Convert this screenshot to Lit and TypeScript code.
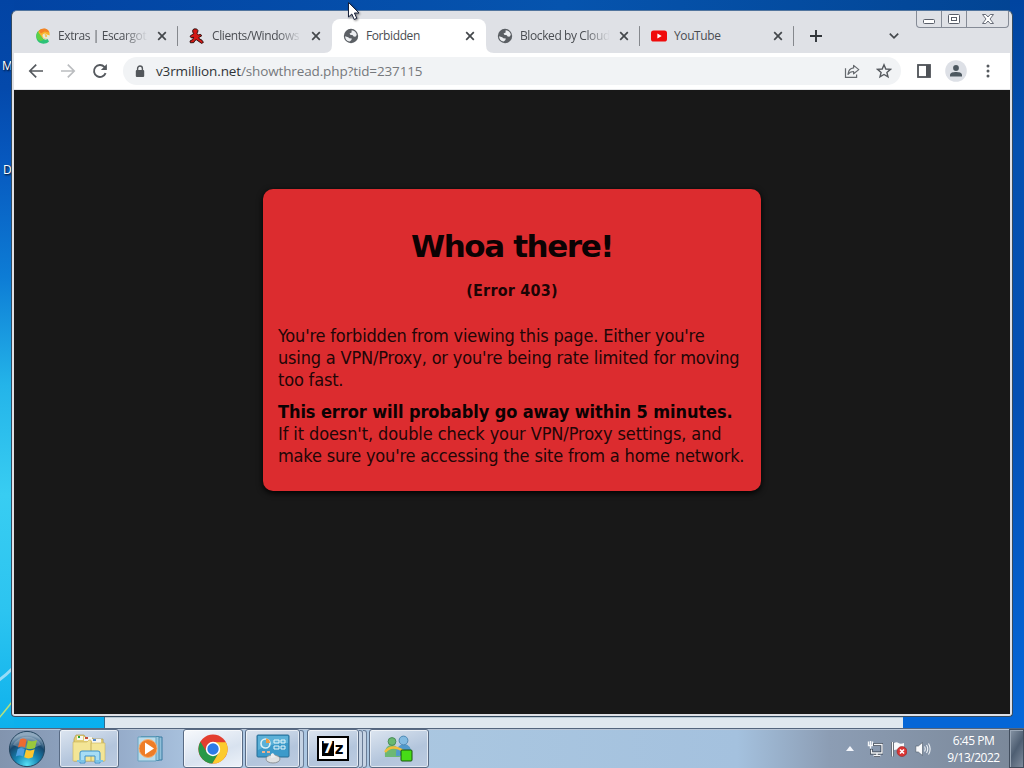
import { LitElement, css, html, svg, nothing } from 'lit';
import { customElement, property } from 'lit/decorators.js';
import { classMap } from 'lit/directives/class-map.js';

const globe = svg`
  <circle cx="8" cy="8" r="7.2" fill="#5b5f64" />
  <path d="M2.1 8.2L5.2 9.2L6.4 10.2L8.8 10.4L8.4 12L6.8 13.6C3.6 13 2 10.8 2.1 8.2Z" fill="#eceef1" />
  <path d="M8.6 2.2C11.6 2.4 13.4 4.4 13.8 7L12.4 8.8L10.6 8.6L9.8 7.2L7.2 6.8L6.6 5.4L8.6 4.6Z" fill="#eceef1" />
`;

const icons: Record<string, unknown> = {
  globe,
  escargot: svg`
    <path d="M2.6 3.4C.2 7 .8 12.4 4.2 14.6C7.4 16.4 11.6 15.8 14 13.4L12.6 11C10 12.4 7.4 11.4 6.8 8.6L6 4Z" fill="#2cc277" />
    <path d="M1.6 9C1.2 5.4 2.8 2.6 5.4 1.4L7.4 6.4C6.6 8.4 7.4 10.6 9.4 11.6L5.6 13C3.2 12.4 1.8 11 1.6 9Z" fill="#5fd044" />
    <path d="M3.2 4C4.8.6 9.6-.4 12.8 2C14.4 3.4 15 5.4 14.4 7.6C13.8 9.8 12.4 10.8 10.2 11L7.4 9.8L5 6.4Z" fill="#f8b32a" />
    <path d="M4 2.800C6.600 0 10.800 -.2 13.200 2.400L14.200 4.600L9.600 3.600L5.800 5.400Z" fill="#f28327" />
    <path d="M7.600 6.800C8.800 5.200 10.800 5.200 12 6.400L14.600 7.400L14.200 10.200L10.600 10.800C8.200 10.600 7 8.600 7.600 6.800Z" fill="#e6e9d8" />
    <path d="M9.400 5.800C11.400 5.600 12.600 7.200 12 9L10.400 9.200Z" fill="#f5c45c" />
  `,
  runner: svg`
    <path d="M4.800.9H7.600L8.900 2.400L8.700 4.300L7.700 5.300L9.400 6.800L11.800 6.400L12.600 8L9.800 9.400L10 10.600L13 12.200L14.400 14.400L12.600 15.400L7.400 11.800L6 12.400L4.800 14.600L1.400 14.800L1 13L3.600 11.600L4.600 9.200L2.200 9.800L1 8.200L3.200 6.600L4.800 5.600L3.800 4.200L3.700 2.300Z" fill="#d41915" stroke="#220606" stroke-width=".9" />
  `,
  youtube: svg`
    <rect x="0" y="2.4" width="16" height="11.2" rx="2.6" fill="#f00b0b" />
    <path d="M6.4 5.6L10.7 8L6.4 10.4Z" fill="#fff" />
  `,
};

@customElement('browser-tab')
export class BrowserTab extends LitElement {
  @property() icon = 'globe';
  @property() label = '';
  @property({ type: Boolean }) active = false;
  @property({ type: Boolean }) divider = false;
  @property({ type: Boolean }) fade = false;

  render() {
    return html`
      <div class=${classMap({ tab: true, active: this.active, divider: this.divider })}>
        <svg class="icon" viewBox="0 0 16 16">${icons[this.icon]}</svg>
        <span class=${classMap({ label: true, fade: this.fade })}>${this.label}</span>
        <svg class="close" viewBox="0 0 10 10">
          <path d="M1.2 1.2L8.8 8.8M8.8 1.2L1.2 8.8" stroke="#43474b" stroke-width="1.7" />
        </svg>
      </div>
      ${this.active
        ? html`<svg class="foot left" viewBox="0 0 8 8"><path d="M8 0V8H0Q8 8 8 0Z" fill="#fff" /></svg>
            <svg class="foot right" viewBox="0 0 8 8"><path d="M0 0V8H8Q0 8 0 0Z" fill="#fff" /></svg>`
        : nothing}
    `;
  }

  static styles = css`
    :host {
      display: block;
      position: relative;
      width: 154px;
      height: 34px;
    }
    .tab {
      box-sizing: border-box;
      height: 34px;
      display: flex;
      align-items: center;
      padding: 0 11px 0 11px;
      border-radius: 8px 8px 0 0;
      position: relative;
    }
    .tab.active {
      background: #fff;
    }
    .tab.divider {
      background: linear-gradient(#85888d, #85888d) right 7px / 1px 20px no-repeat;
    }
    .icon {
      width: 16px;
      height: 16px;
      flex: none;
    }
    .label {
      margin-left: 7px;
      width: 90px;
      flex: none;
      overflow: hidden;
      white-space: nowrap;
      color: #4a4d52;
      font: 12px/16px 'Open Sans', 'Noto Sans', sans-serif;
      letter-spacing: -0.4px;
    }
    .label.fade {
      -webkit-mask-image: linear-gradient(90deg, #000 72%, transparent);
      mask-image: linear-gradient(90deg, #000 72%, transparent);
    }
    .close {
      width: 10px;
      height: 10px;
      margin-left: 9px;
      flex: none;
    }
    .foot {
      position: absolute;
      bottom: 0;
      width: 8px;
      height: 8px;
    }
    .left {
      left: -8px;
    }
    .right {
      right: -8px;
    }
  `;
}

@customElement('browser-toolbar')
export class BrowserToolbar extends LitElement {
  render() {
    return html`
      <svg class="nav" viewBox="0 0 16 16">
        <path d="M15 8H2M8.2 1.6L1.8 8L8.2 14.4" stroke="#55595e" />
      </svg>
      <svg class="nav" viewBox="0 0 16 16">
        <path d="M1 8H14M7.8 1.6L14.2 8L7.8 14.4" stroke="#bbbdc0" />
      </svg>
      <svg class="nav" viewBox="0 0 16 16">
        <path d="M13.6 10.2A6 6 0 1 1 12.4 3.9L14 5.6" stroke="#55595e" stroke-width="1.9" />
        <path d="M14.9 1V7H8.9Z" fill="#55595e" />
      </svg>
      <div class="address">
        <svg class="lock" viewBox="0 0 10 13">
          <path d="M2.6 5.5V3.4a2.4 2.4 0 0 1 4.8 0V5.5" stroke="#53575b" stroke-width="1.4" fill="none" />
          <rect x=".8" y="5" width="8.4" height="7" rx="1" fill="#53575b" />
        </svg>
        <span class="url"><span class="domain">v3rmillion.net</span>/showthread.php?tid=237115</span>
        <svg class="share" viewBox="0 0 16 16">
          <path d="M1.5 5.2V14.4H12.6V11.6" stroke="#65696e" stroke-width="1.2" fill="none" />
          <path d="M9.6 2.4L14.8 6.6L9.6 10.8V8.5C7 8.5 5.3 9.3 4 11.4C4.3 7.8 6.2 5.2 9.6 4.9Z" stroke="#65696e" stroke-width="1.2" fill="none" stroke-linejoin="round" />
        </svg>
        <svg class="star" viewBox="0 0 16 16">
          <path d="M8 1.8L9.8 6L14.4 6.4L10.9 9.4L12 13.9L8 11.5L4 13.9L5.1 9.4L1.6 6.4L6.2 6Z" stroke="#55595e" stroke-width="1.4" fill="none" />
        </svg>
      </div>
      <svg class="panel" viewBox="0 0 14 14">
        <rect x="1" y="1" width="12" height="12" stroke="#4e5257" stroke-width="1.8" fill="none" />
        <rect x="9" y="1" width="4" height="12" fill="#4e5257" />
      </svg>
      <svg class="profile" viewBox="0 0 22 22">
        <circle cx="11" cy="11" r="10.8" fill="#dde0e6" />
        <circle cx="11" cy="8" r="2.9" fill="#4d5860" />
        <path d="M5 16.6V15C5 12.6 8.4 12 11 12S17 12.6 17 15V16.6Z" fill="#4d5860" />
      </svg>
      <svg class="dots" viewBox="0 0 4 14">
        <g fill="#55595e"><circle cx="2" cy="2" r="1.5" /><circle cx="2" cy="7" r="1.5" /><circle cx="2" cy="12" r="1.5" /></g>
      </svg>
    `;
  }

  static styles = css`
    :host {
      box-sizing: border-box;
      display: flex;
      align-items: center;
      height: 37px;
      padding: 0 19px 0 14px;
      background: #fff;
      border-bottom: 1px solid #e6e7e9;
    }
    svg {
      flex: none;
    }
    .nav {
      width: 16px;
      height: 16px;
      margin-right: 16px;
      fill: none;
      stroke-width: 1.7;
    }
    .address {
      box-sizing: border-box;
      display: flex;
      align-items: center;
      width: 778px;
      height: 28px;
      margin-left: -1px;
      padding: 0 9px 0 12px;
      border-radius: 14px;
      background: #f1f3f5;
    }
    .lock {
      width: 10px;
      height: 13px;
    }
    .url {
      flex: 1;
      margin-left: 11px;
      white-space: nowrap;
      color: #75787c;
      font: 13.5px/20px 'Open Sans', 'Noto Sans', sans-serif;
      letter-spacing: -0.13px;
    }
    .domain {
      color: #303337;
    }
    .share {
      width: 16px;
      height: 16px;
    }
    .star {
      width: 16px;
      height: 16px;
      margin-left: 16px;
    }
    .panel {
      width: 14px;
      height: 14px;
      margin-left: 16px;
    }
    .profile {
      width: 22px;
      height: 22px;
      margin-left: 14px;
    }
    .dots {
      width: 4px;
      height: 14px;
      margin-left: 19px;
    }
  `;
}

@customElement('error-page')
export class ErrorPage extends LitElement {
  render() {
    return html`
      <div class="card">
        <h1>Whoa there!</h1>
        <h2>(Error 403)</h2>
        <p>
          <span class="line">You're forbidden from viewing this page. Either you're</span>
          <span class="line">using a VPN/Proxy, or you're being rate limited for moving</span>
          <span class="line">too fast.</span>
        </p>
        <p>
          <strong class="line">This error will probably go away within 5 minutes.</strong>
          <span class="line loose">If it doesn't, double check your VPN/Proxy settings, and</span>
          <span class="line">make sure you're accessing the site from a home network.</span>
        </p>
      </div>
    `;
  }

  static styles = css`
    :host {
      display: flex;
      justify-content: center;
      align-items: flex-start;
      flex: 1;
      background: #181818;
      padding-top: 98.5px;
      font-family: 'DejaVu Sans Condensed', 'DejaVu Sans', sans-serif;
      font-stretch: condensed;
      color: #220607;
    }
    .card {
      box-sizing: border-box;
      width: 498px;
      height: 302px;
      padding: 36px 15px 0;
      border-radius: 10px;
      background: #dc2c2f;
      box-shadow: 0 2px 6px #000;
    }
    h1,
    h2 {
      margin: 0;
      text-align: center;
      white-space: nowrap;
      color: #0c0203;
    }
    h1 {
      font-family: 'DejaVu Sans', sans-serif;
      font-stretch: normal;
      font-size: 31px;
      line-height: 42px;
      letter-spacing: -1.4px;
    }
    h2 {
      margin-top: 13px;
      font-size: 16px;
      line-height: 21px;
      letter-spacing: 0.2px;
      color: #1c0405;
    }
    p {
      margin: 24px 0 0;
      font-size: 18px;
      line-height: 22px;
      letter-spacing: -0.17px;
    }
    p + p {
      margin-top: 10px;
    }
    .line {
      display: block;
      white-space: nowrap;
    }
    .loose {
      letter-spacing: -0.1px;
    }
    strong {
      color: #0c0203;
      letter-spacing: -0.09px;
    }
  `;
}

@customElement('task-bar')
export class TaskBar extends LitElement {
  render() {
    return html`
      <svg class="start" viewBox="0 0 38 38">
        <defs>
          <radialGradient id="orb" cx=".5" cy=".95" r=".85">
            <stop offset="0" stop-color="#56e0f5" />
            <stop offset=".4" stop-color="#1686b4" />
            <stop offset=".75" stop-color="#17476d" />
            <stop offset="1" stop-color="#8fa9bf" />
          </radialGradient>
        </defs>
        <circle cx="19" cy="19" r="17.6" fill="url(#orb)" stroke="#254660" />
        <path d="M5 15A15 13 0 0 1 33 15Q19 22 5 15Z" fill="#fff" opacity=".25" />
        <path d="M12 9.5Q15 7.5 18.6 9.7L17 17.6Q13.5 15.6 10 17.6Z" fill="#ed6a31" />
        <path d="M19.9 10.3Q24 12.5 29 10L27 18Q22.6 20 18.3 18.2Z" fill="#9ac83c" />
        <path d="M9.7 18.9Q13 17 16.7 18.9L15 26.5Q11.6 24.6 7.8 26.5Z" fill="#4d9ee0" />
        <path d="M18 19.5Q22.5 21.5 26.7 19.3L24.7 27.3Q20.5 29.5 16.2 27.3Z" fill="#fcc62f" />
      </svg>
      <div class="button explorer">
        <svg viewBox="0 0 34 30">
          <path d="M2 5L4 1H12L14 4H20L22 5H31L32 27H2Z" fill="#e4cf75" stroke="#af984a" stroke-width=".7" />
          <path d="M5 2H11V6H5ZM12 3H20V7H12ZM20 5H29V9H20Z" fill="#f6f5ee" />
          <path d="M6 2H8V4H6Z" fill="#29a335" /><path d="M13 3H16V5H13Z" fill="#c64f38" /><path d="M21 5H24V7H21Z" fill="#5589ce" />
          <path d="M1 8H15L17 6H19V27H1ZM19 9H33V27H19Z" fill="#f3e596" stroke="#cbb45b" stroke-width=".6" />
          <path d="M8 29V19Q8 17 10 17H26Q28 17 28 19V29H23V22H13V29Z" fill="#a7ddf5" stroke="#3e91ca" />
          <path d="M5 27H12M24 27H31" stroke="#7ac4e8" stroke-width="2" />
        </svg>
      </div>
      <svg class="media" viewBox="0 0 30 28">
        <path d="M8 2H26V25H8Z" fill="#91bfd9" stroke="#397ba1" />
        <path d="M5 1.5H23V25.5H5Z" fill="#9bc9df" stroke="#4c8eaf" />
        <path d="M2 2H20V26H2Z" fill="#badceb" stroke="#69a3c0" />
        <circle cx="12" cy="13.5" r="9" fill="#ee7d27" stroke="#f4ae71" />
        <path d="M9 7.5L18 13.5L9 19.5Z" fill="#fff" />
      </svg>
      <div class="button chrome">
        <svg viewBox="0 0 30 30">
          <circle cx="15" cy="15" r="14.6" fill="#e33e2f" />
          <path d="M15 15L2.4 7.7A14.6 14.6 0 0 0 14.4 29.6L21 18.5Z" fill="#279847" />
          <path d="M15 8.2H27.9A14.6 14.6 0 0 1 14.4 29.6L21 18.5Z" fill="#fccb2f" />
          <path d="M2.4 7.7L9 18.5L15 8.2Z" fill="#e33e2f" />
          <circle cx="15" cy="15" r="7.2" fill="#fff" />
          <circle cx="15" cy="15" r="5.7" fill="#2d7be6" />
        </svg>
      </div>
      <div class="button control">
        <svg viewBox="0 0 34 30">
          <rect x="1" y="1" width="32" height="22" rx="1" fill="#3c9aca" stroke="#276c94" />
          <path d="M2 2H32V9Q15 9 2 16Z" fill="#72c1e1" opacity=".6" />
          <circle cx="9.5" cy="9.5" r="4.5" fill="none" stroke="#def1f7" stroke-width="1.6" />
          <path d="M10 9V4.5A4.5 4.5 0 0 1 14 9Z" fill="#ee9d42" />
          <path d="M18 6H23V9H18ZM25 6H29V9H25ZM18 12H23V15H18ZM25 12H29V15H25Z" fill="none" stroke="#e8f7fa" />
          <path d="M6 18H9M11 18H14" stroke="#f0b18b" stroke-width="2" />
          <ellipse cx="17" cy="25" rx="7" ry="4" fill="#dfe1e2" stroke="#8f9498" />
          <path d="M15 24V20L17 19L20 23Z" fill="#ecedee" />
        </svg>
      </div>
      <div class="stack one"></div>
      <div class="button zip"><div class="seven"><span class="big">7</span><span class="small">z</span></div></div>
      <div class="stack two"></div>
      <div class="stack"></div>
      <div class="button messenger">
        <svg viewBox="0 0 30 28">
          <path d="M1 22Q0 10 8 10Q15 10 16 22Z" fill="#6db873" />
          <path d="M12 21Q11 10 20 9Q27 9 28 20Z" fill="#5199cb" />
          <circle cx="8" cy="6.5" r="3.9" fill="#69b970" stroke="#4b8c5b" />
          <circle cx="19.5" cy="5.5" r="4.4" fill="#83bbe1" stroke="#4c88b3" />
          <path d="M1 17Q8 8 21 17" fill="none" stroke="#f2bd3b" stroke-width="2.5" />
          <rect x="17" y="15" width="11" height="11" rx="1" fill="#47dc17" stroke="#18570f" />
        </svg>
      </div>
      <div class="tray">
        <svg class="up" viewBox="0 0 8 5"><path d="M0 5L4 0L8 5Z" fill="#f2f5fb" /></svg>
        <svg class="network" viewBox="0 0 16 16">
          <path d="M5.5 3.5H15V12H4.5V8M7 14.5H13" stroke="#36404e" stroke-width="3" fill="none" />
          <path d="M7 3.5H15V12H4.500V8.500M6.500 14.500H13.500M10 12V14.500M1.500 .5V4.500H5.500V.5M3.500 0V7.500" stroke="#f5f7f9" stroke-width="1.400" fill="none" />
        </svg>
        <svg class="flag" viewBox="0 0 16 16">
          <path d="M1.500 1V15.500" stroke="#3c4552" stroke-width="3" />
          <path d="M1.500 1V15.500" stroke="#f7f8fa" stroke-width="1.500" />
          <path d="M3 2Q5.500 .5 7.500 2T13 2V9Q10 10 8 9T3 9Z" fill="#f7f8fa" />
          <circle cx="11" cy="10.500" r="5" fill="#da3433" stroke="#912525" stroke-width=".6" />
          <path d="M9 8.500L13 12.500M13 8.500L9 12.500" stroke="#fff" stroke-width="1.600" />
        </svg>
        <svg class="sound" viewBox="0 0 16 16">
          <path d="M.8 5H3.300L7.500 1.500V14.500L3.300 11H.8Z" fill="#f7f8fa" stroke="#4c5766" stroke-width=".6" />
          <path d="M9.500 5.500Q11 8 9.500 10.500M11.500 4Q14 8 11.500 12M13.500 2.500Q16.800 8 13.500 13.500" stroke="#eef2f6" stroke-width="1.100" fill="none" />
        </svg>
        <div class="clock"><span>6:45 PM</span><span>9/13/2022</span></div>
        <div class="peek"></div>
      </div>
    `;
  }

  static styles = css`
    :host {
      box-sizing: border-box;
      display: flex;
      align-items: center;
      height: 40px;
      padding-left: 8px;
      border-top: 1px solid #53657d;
      box-shadow: inset 0 1px 0 #b9c7d8;
      background: linear-gradient(90deg, #8294ae 0, #94aac8 11%, #adc7e3 20%, #a9c6e0 45%, #a4c1de 72%, #8c9db4 81%, #7a8798 100%);
    }
    svg {
      flex: none;
    }
    .start {
      width: 38px;
      height: 38px;
    }
    .button {
      box-sizing: border-box;
      display: flex;
      align-items: center;
      justify-content: center;
      flex: none;
      height: 39px;
      border: 1px solid #596b84;
      border-radius: 3px;
      box-shadow: inset 0 0 0 1px rgba(255, 255, 255, 0.6);
      background: linear-gradient(160deg, #dce5f0, #b3c5dc 60%, #bccbe0);
    }
    .explorer {
      width: 60px;
      margin-left: 13px;
    }
    .explorer svg {
      width: 34px;
      height: 30px;
    }
    .media {
      width: 30px;
      height: 28px;
      margin: 0 17px 0 17px;
    }
    .chrome {
      width: 60px;
      background: linear-gradient(160deg, #f7f9fc, #d8e2ef 60%, #edf2f9);
    }
    .chrome svg {
      width: 30px;
      height: 30px;
    }
    .control {
      width: 55px;
      margin-left: 2px;
    }
    .control svg {
      width: 34px;
      height: 30px;
    }
    .zip {
      width: 52px;
    }
    .seven {
      box-sizing: border-box;
      display: flex;
      align-items: flex-end;
      width: 32px;
      height: 25px;
      padding: 3px;
      border: 2px solid #000;
      background: #fff;
      font: bold 17px/15px 'DejaVu Sans', sans-serif;
    }
    .big {
      width: 12px;
      height: 15px;
      background: #000;
      color: #fff;
      text-align: center;
      font-size: 15px;
    }
    .small {
      width: 10px;
      text-align: center;
      line-height: 13px;
      font-size: 15px;
    }
    .stack {
      box-sizing: border-box;
      width: 4px;
      height: 38px;
      border: 1px solid #6a7d97;
      border-left: 0;
      border-radius: 0 3px 3px 0;
      background: #c5d3e4;
    }
    .one {
      margin-right: 3px;
    }
    .stack.two + .stack {
      margin-right: 2px;
    }
    .messenger {
      width: 60px;
    }
    .messenger svg {
      width: 30px;
      height: 28px;
    }
    .tray {
      display: flex;
      align-items: center;
      margin-left: auto;
    }
    .up {
      width: 8px;
      height: 5px;
    }
    .network {
      width: 16px;
      height: 16px;
      margin-left: 13px;
    }
    .flag {
      width: 16px;
      height: 16px;
      margin-left: 8px;
    }
    .sound {
      width: 16px;
      height: 16px;
      margin-left: 8px;
    }
    .clock {
      display: flex;
      flex-direction: column;
      align-items: center;
      width: 71px;
      margin-left: 7px;
      color: #fff;
      font: 12px/17px 'Open Sans', 'Noto Sans', sans-serif;
      letter-spacing: -0.5px;
    }
    .peek {
      box-sizing: border-box;
      width: 15px;
      height: 39px;
      border: 1px solid #414d5d;
      box-shadow: inset 1px 1px 0 #9aa7b6;
      background: linear-gradient(120deg, #8795a5, #4e5e72 50%, #7e8b9c);
    }
  `;
}

@customElement('app-root')
export class AppRoot extends LitElement {
  render() {
    return html`
      <div class="desktop">
        <svg class="rays" viewBox="0 0 15 60">
          <path d="M-1 14Q5 10 12 3" stroke="#97dcf7" stroke-width="3" fill="none" />
          <path d="M-1 52Q5 45 12 36" stroke="#b6e17d" stroke-width="1.5" fill="none" />
        </svg>
        <span class="shortcut first">M</span>
        <span class="shortcut second">D</span>
        <div class="behind"></div>
      </div>
      <task-bar></task-bar>
      <div class="window">
        <div class="strip">
          <browser-tab icon="escargot" label="Extras | Escargot" divider fade></browser-tab>
          <browser-tab icon="runner" label="Clients/Windows" fade></browser-tab>
          <browser-tab label="Forbidden" active></browser-tab>
          <browser-tab label="Blocked by Cloud" divider fade></browser-tab>
          <browser-tab icon="youtube" label="YouTube" divider></browser-tab>
          <svg class="plus" viewBox="0 0 12 12"><path d="M6 0V12M0 6H12" stroke="#303439" stroke-width="1.9" /></svg>
          <svg class="chevron" viewBox="0 0 10 6"><path d="M.8.6L5 4.8L9.2.6" stroke="#44484c" stroke-width="1.7" fill="none" /></svg>
        </div>
        <browser-toolbar></browser-toolbar>
        <error-page></error-page>
        <div class="controls">
          <div class="control"><svg viewBox="0 0 14 12"><rect x="1.5" y="6.5" width="11" height="4" rx="1" fill="#fff" stroke="#595e69" /></svg></div>
          <div class="control"><svg viewBox="0 0 14 12"><rect x="1.5" y="1.5" width="11" height="9" rx="1" fill="#fff" stroke="#595e69" /><rect x="4.5" y="4.5" width="5" height="3" fill="#fff" stroke="#595e69" /></svg></div>
          <div class="control wide"><svg viewBox="0 0 14 12"><path d="M1.5 1.5H4.8L7 4L9.2 1.5H12.5L9 6L12.5 10.5H9.2L7 8L4.8 10.5H1.5L5 6Z" fill="#fff" stroke="#686d78" /></svg></div>
        </div>
      </div>
      <svg class="cursor" viewBox="0 0 14 20">
        <path d="M1.5 1.5V16L4.8 13L7.2 18.5L9.8 17.3L7.4 12H12Z" fill="#fff" stroke="#17203a" />
      </svg>
    `;
  }

  static styles = css`
    :host {
      display: flex;
      flex-direction: column;
      position: relative;
      width: 1024px;
      height: 768px;
      overflow: hidden;
    }
    .desktop {
      flex: 1;
      display: flex;
      align-items: flex-end;
      position: relative;
      background:
        linear-gradient(#0044a0, #0451b0 20%, #0450b4 55%, #0468da) right / 14px 100% no-repeat,
        linear-gradient(#0244a4 0, #0449ab 12%, #0758be 22%, #0d7cd5 38%, #24b4e9 53%, #38cdf2 68%, #2cc4f0 84%, #0eb1ec 100%) left / 14px 100% no-repeat,
        linear-gradient(90deg, #0243a3, #0654ae 55%, #024493) top / 100% 20px no-repeat,
        linear-gradient(90deg, #0eb1ec 0, #08b0f0 10%, #0466d7 88%, #0466d7 100%);
    }
    .behind {
      box-sizing: border-box;
      width: 798px;
      height: 11px;
      margin-left: 105px;
      background: #dfe8ef;
      border-top: 1px solid #b7c7d3;
      box-shadow: -1px 0 0 #2f6a8e;
    }
    .shortcut {
      position: absolute;
      color: #fff;
      font: 12px/16px 'Open Sans', 'Noto Sans', sans-serif;
      text-shadow: 1px 1px 2px #000;
    }
    .first {
      left: 2px;
      top: 58px;
      letter-spacing: -1px;
    }
    .second {
      left: 3px;
      top: 162px;
    }
    .rays {
      position: absolute;
      left: 0;
      top: 666px;
      width: 15px;
      height: 60px;
    }
    .window {
      box-sizing: border-box;
      position: absolute;
      left: 11px;
      top: 10px;
      width: 1002px;
      height: 707px;
      display: flex;
      flex-direction: column;
      padding: 0 2px 2px;
      border: 1px solid #354b60;
      border-top-color: #52759e;
      border-radius: 6px 6px 4px 4px;
      background: #dfe1e6;
    }
    .strip {
      display: flex;
      align-items: flex-end;
      height: 42px;
      flex: none;
      padding-left: 10px;
    }
    .plus {
      width: 12px;
      height: 12px;
      margin: 0 0 11px 16px;
    }
    .chevron {
      width: 10px;
      height: 6px;
      margin: 0 0 14px 67px;
    }
    .controls {
      position: absolute;
      right: 3px;
      top: 0;
      display: flex;
      box-sizing: border-box;
      width: 93px;
      height: 17px;
      border: 1px solid #858b96;
      border-top: 0;
      border-radius: 0 0 4px 4px;
    }
    .control {
      display: flex;
      align-items: center;
      justify-content: center;
      width: 24px;
      border-right: 1px solid #858b96;
    }
    .control.wide {
      flex: 1;
      border: 0;
    }
    .control svg {
      width: 14px;
      height: 12px;
    }
    .cursor {
      position: absolute;
      left: 347px;
      top: 1px;
      width: 14px;
      height: 20px;
      filter: drop-shadow(1px 1px 1px rgba(0, 0, 0, 0.5));
    }
  `;
}

declare global {
  interface HTMLElementTagNameMap {
    'app-root': AppRoot;
    'browser-tab': BrowserTab;
    'browser-toolbar': BrowserToolbar;
    'error-page': ErrorPage;
    'task-bar': TaskBar;
  }
}
